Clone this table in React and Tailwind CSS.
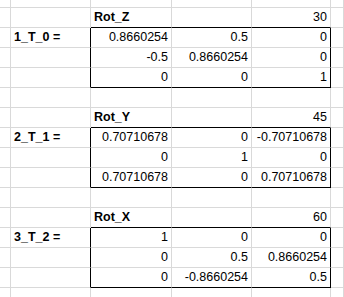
import React from 'react'

const blocks = [
  {
    name: 'Rot_Z', angle: '30', label: '1_T_0 =',
    m: [['0.8660254', '0.5', '0'], ['-0.5', '0.8660254', '0'], ['0', '0', '1']],
  },
  {
    name: 'Rot_Y', angle: '45', label: '2_T_1 =',
    m: [['0.70710678', '0', '-0.70710678'], ['0', '1', '0'], ['0.70710678', '0', '0.70710678']],
  },
  {
    name: 'Rot_X', angle: '60', label: '3_T_2 =',
    m: [['1', '0', '0'], ['0', '0.5', '0.8660254'], ['0', '-0.8660254', '0.5']],
  },
]

// build sheet rows: each row = { h, cells[6], kind }
function buildRows() {
  const rows = [{ kind: 'top', cells: ['', '', '', '', '', ''] }]
  blocks.forEach((b, bi) => {
    rows.push({ kind: 'head', cells: ['', '', b.name, '', b.angle, ''] })
    b.m.forEach((r, ri) => {
      rows.push({ kind: ri === 2 ? 'last' : 'mat', cells: ['', ri === 0 ? b.label : '', ...r, ''] })
    })
    if (bi < blocks.length - 1) rows.push({ kind: 'gap', cells: ['', '', '', '', '', ''] })
  })
  rows.push({ kind: 'bottom', cells: ['', '', '', '', '', ''] })
  return rows
}

const widths = ['w-[11px]', 'w-[80px]', 'w-[81px]', 'w-[80px]', 'w-[79px]', 'flex-1']

function Cell({ row, col, text }) {
  const inBox = row.kind === 'mat' || row.kind === 'last'
  const rightBlack = inBox && (col === 1 || col === 4)
  const bottomBlack = (row.kind === 'head' || row.kind === 'last') && col >= 2 && col <= 4
  const bold = (row.kind === 'head' && col === 2) || (col === 1 && text)
  const left = bold
  return (
    <div
      className={
        widths[col] + ' shrink-0 h-full flex items-center border-r border-b ' +
        (rightBlack ? 'border-r-black ' : 'border-r-[#d9d9d9] ') +
        (bottomBlack ? 'border-b-black ' : 'border-b-[#d9d9d9] ') +
        (left ? 'justify-start pl-[3px] font-bold ' : 'justify-end pr-[3px] ')
      }
    >
      {text && <span className="leading-none whitespace-nowrap">{text}</span>}
    </div>
  )
}

export default function App() {
  const rows = buildRows()
  return (
    <div className="w-[344px] h-[297px] overflow-hidden bg-white text-black text-[12.5px]" style={{ fontFamily: '"Liberation Sans", Arial, sans-serif' }}>
      {rows.map((row, i) => (
        <div key={i} className={'flex ' + (row.kind === 'top' ? 'h-[8px]' : 'h-[20px]')}>
          {row.cells.map((t, c) => (
            <Cell key={c} row={row} col={c} text={t} />
          ))}
        </div>
      ))}
    </div>
  )
}
